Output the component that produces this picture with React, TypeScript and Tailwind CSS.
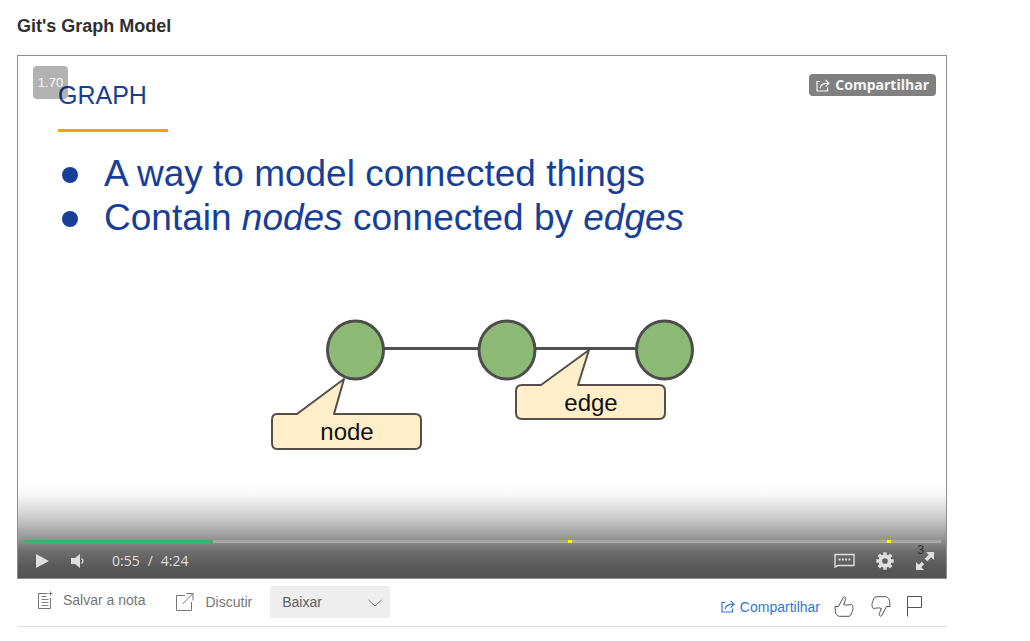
import { useState } from "react";

function ShareIcon({ className }: { className: string }) {
  return (
    <svg viewBox="0 0 14 13" className={className} fill="none" stroke="currentColor" strokeWidth="1.2" aria-hidden="true">
      <path d="M4 2.500H1v9.500h10.500V8.500" />
      <path d="M4.300 9.300C4.300 6 6.500 4.200 12.500 4.200M9.600.8 13 4.200 9.600 7.600" />
    </svg>
  );
}

function NoteIcon() {
  return (
    <svg viewBox="0 0 16 19" className="h-[19px] w-4" fill="none" stroke="currentColor" aria-hidden="true">
      <path d="M9.500 2.500H.5v15h12V7" />
      <path d="M3.500 5.500h5M3.500 8.500h7M3.500 11.500h7M3.500 14.500h7M12.500.5v4M10.500 2.500h4" strokeWidth=".9" />
    </svg>
  );
}

function DiscussIcon() {
  return (
    <svg viewBox="0 0 18 18" className="h-[18px] w-[18px]" fill="none" stroke="currentColor" aria-hidden="true">
      <path d="M9 2.500H.5v15h15V9M10.500.5h6.500v7M17 .5 6.500 11" />
    </svg>
  );
}

function ThumbIcon({ className }: { className: string }) {
  return (
    <svg viewBox="0 0 20 21" className={className} fill="none" stroke="currentColor" strokeWidth="1" strokeLinejoin="round" aria-hidden="true">
      <path d="M1 10.500H4.500L9 2C9.600.6 10.500.5 11 1c.9.8.9 2.200.4 3.300L9.600 8.500c2.600 1.300 5.300.1 8.200.1.8.6 1.200 1.500.9 2.600.5.9.5 2-.1 2.900.1 1.300-.3 2.100-1 2.700-.3 1.700-1.100 2.900-2.600 3.500H5.200C3.200 19.800 1.500 18 1.300 15.500Z" />
    </svg>
  );
}

function FlagIcon() {
  return (
    <svg viewBox="0 0 16 21" className="h-[21px] w-4" fill="none" stroke="currentColor" aria-hidden="true">
      <path d="M.5 20.500V.5h14v11H.5" />
    </svg>
  );
}

function GearIcon() {
  return (
    <svg viewBox="-9 -9 18 18" className="h-[18px] w-[18px]" fill="none" stroke="currentColor" aria-hidden="true">
      <circle r="4.700" strokeWidth="3.700" />
      <g strokeWidth="3.400">
        <path d="M0-8.700V-5M0 8.700V5M-8.700 0H-5M8.700 0H5" />
        <path d="M-6.200-6.200-4-4M6.200 6.200 4 4M-6.200 6.200-4 4M6.200-6.200 4-4" />
      </g>
    </svg>
  );
}

function GraphDiagram() {
  return (
    <svg viewBox="0 0 424 131" className="mx-auto h-[131px] w-[424px]" role="img" aria-label="Graph of three nodes joined by edges">
      <path d="M85 29.500H237M238 29.500H394" stroke="#505050" strokeWidth="3" />
      <g fill="#8cba75" stroke="#4d4d4d" strokeWidth="3">
        <ellipse cx="84.500" cy="31" rx="28" ry="29" />
        <ellipse cx="236" cy="31" rx="28" ry="29" />
        <ellipse cx="393.500" cy="31" rx="28" ry="29" />
      </g>
      <g fill="#feefca" stroke="#554f4c" strokeWidth="2" strokeLinejoin="round">
        <path d="M6 95H26L73 60 63 95h81q6 0 6 6v23q0 6-6 6H6q-5 0-5-6v-23q0-6 5-6Z" />
        <path d="M251 66h19l48-35-11 35h81q6 0 6 6v22q0 6-6 6H251q-6 0-6-6V72q0-6 6-6Z" />
      </g>
      <g className="font-['Liberation_Sans',sans-serif] text-[24px]" fill="#111" textAnchor="middle">
        <text x="76" y="121">node</text>
        <text x="320" y="92">edge</text>
      </g>
    </svg>
  );
}

function Slide() {
  return (
    <div className="pl-10 pt-5 text-[#173e98]">
      <h2 className="text-[25px] leading-[38px]">GRAPH</h2>
      <div className="mt-[15px] h-[3px] w-[110px] bg-[#f7a009]" />
      <ul className="mt-5 text-[37px] leading-[44px]">
        <li className="flex items-center gap-[26px] whitespace-nowrap">
          <span className="ml-1 mt-[2px] size-4 shrink-0 rounded-full bg-[#173e98]" />
          <span>A way to model connected things</span>
        </li>
        <li className="flex items-center gap-[26px] whitespace-nowrap">
          <span className="ml-1 mt-[2px] size-4 shrink-0 rounded-full bg-[#173e98]" />
          <span>
            Contain <em>nodes</em> connected by <em>edges</em>
          </span>
        </li>
      </ul>
      <div className="mt-[79px] pr-[38px]">
        <GraphDiagram />
      </div>
    </div>
  );
}

function PlayerControls() {
  const [time, setTime] = useState(55);
  const total = 264;
  const clock = `${Math.floor(time / 60)}:${String(time % 60).padStart(2, "0")}`;

  return (
    <div className="absolute inset-x-0 bottom-0 bg-[linear-gradient(to_bottom,transparent_0%,rgba(0,0,0,0.03)_14%,rgba(0,0,0,0.2)_37%,rgba(0,0,0,0.44)_61%,rgba(0,0,0,0.57)_72%,rgba(0,0,0,0.65)_88%,rgba(0,0,0,0.67)_100%)] px-[5px] pt-[58px] text-[#dedede]">
      <div className="relative h-[3px] bg-[#a7a7a7]">
        <div className="h-full bg-[#3cb16d]" style={{ width: `${(time / total) * 99.6}%` }} />
        <span className="absolute left-[59.4%] top-0 h-[3px] w-1 bg-[#ff0]" />
        <span className="absolute left-[94.1%] top-0 h-[3px] w-1 bg-[#ff0]" />
        <input
          type="range"
          aria-label="Progresso do vídeo"
          min={0}
          max={total}
          value={time}
          onChange={(event) => setTime(Number(event.target.value))}
          className="absolute inset-x-0 top-0 h-[3px] w-full cursor-pointer opacity-0"
        />
      </div>
      <div className="flex h-[35px] items-center pl-[13px] pr-[7px]">
        <button aria-label="Reproduzir" className="mr-[22px]">
          <svg viewBox="0 0 13 14" className="block h-[14px] w-[13px]" fill="currentColor" aria-hidden="true">
            <path d="M0 0 13 7 0 14Z" />
          </svg>
        </button>
        <button aria-label="Volume">
          <svg viewBox="0 0 14 14" className="block h-[14px] w-[14px]" fill="currentColor" aria-hidden="true">
            <path d="M0 4h4l5-4v14L4 10H0Z" />
            <path d="M10.500 4.500q3 2.500 0 5" fill="none" stroke="currentColor" strokeWidth="1.300" />
          </svg>
        </button>
        <div className="ml-[27px] flex gap-2 font-['Open_Sans','Noto_Sans',sans-serif] text-[14px] leading-5">
          <span>{clock}</span>
          <span>/</span>
          <span>4:24</span>
        </div>
        <div className="ml-auto flex items-center">
          <button aria-label="Legendas" className="mr-[21px]">
            <svg viewBox="0 0 21 15" className="block h-[15px] w-[21px]" fill="none" stroke="currentColor" aria-hidden="true">
              <path d="M1 1.500h19v11H4L1 14Z" strokeWidth="1.400" />
              <path d="M4.500 6.500h12" strokeWidth="2" strokeDasharray="2 1.300" />
            </svg>
          </button>
          <button aria-label="Configurações" className="mr-[22px]">
            <GearIcon />
          </button>
          <button aria-label="Tela cheia" className="relative">
            <svg viewBox="0 0 18 18" className="block h-[18px] w-[18px]" fill="currentColor" aria-hidden="true">
              <path d="M10 0h8v8l-2.700-2.700-4 4-2.600-2.600 4-4ZM0 10v8h8l-2.700-2.700 3-3-2.600-2.600-3 3Z" />
            </svg>
            <span className="absolute -top-[10px] left-[1px] text-[13px] leading-4 text-[#333]">3</span>
          </button>
        </div>
      </div>
    </div>
  );
}

function Player() {
  return (
    <section className="relative aspect-[930/524] border border-[#8d8d8d] bg-white" aria-label="Vídeo">
      <Slide />
      <div className="absolute left-[15px] top-[10px] flex h-[33px] w-[35px] items-center justify-center rounded bg-black/30 text-[13px] text-white/90">
        1.70
      </div>
      <button className="absolute right-[10px] top-[18px] flex h-[22px] items-center gap-[5px] rounded bg-[#808080] px-[7px] font-['Open_Sans','Noto_Sans',sans-serif] text-[14px] font-bold leading-5 text-[#f5f5f5]">
        <ShareIcon className="h-[13px] w-[14px]" />
        Compartilhar
      </button>
      <PlayerControls />
    </section>
  );
}

function ActionBar() {
  return (
    <div className="ml-px flex h-12 items-start border-b border-[#dedede] text-[14px] leading-5 text-[#757575]">
      <button className="ml-5 mt-[11px] flex items-center gap-[9px]">
        <NoteIcon />
        Salvar a nota
      </button>
      <a href="#discutir" className="ml-[30px] mt-[13px] flex items-center gap-3">
        <DiscussIcon />
        Discutir
      </a>
      <div className="relative ml-[18px] mt-[7px]">
        <select aria-label="Baixar" defaultValue="" className="h-8 w-[120px] appearance-none rounded-xs bg-[#eee] pl-3 text-[#5f5f5f]">
          <option value="">Baixar</option>
        </select>
        <svg viewBox="0 0 14 8" className="pointer-events-none absolute right-2 top-[13px] h-2 w-[14px]" fill="none" stroke="currentColor" aria-hidden="true">
          <path d="M.5 1 7 7l6.500-6" />
        </svg>
      </div>
      <div className="ml-auto mr-6 mt-[17px] flex items-center text-[#4d5258]">
        <a href="#compartilhar" className="mr-[14px] flex items-center gap-[5px] text-[#2e78d0]">
          <ShareIcon className="h-[13px] w-[14px]" />
          Compartilhar
        </a>
        <button aria-label="Gostei" className="mr-[17px]">
          <ThumbIcon className="h-[21px] w-5" />
        </button>
        <button aria-label="Não gostei" className="mr-4">
          <ThumbIcon className="h-[21px] w-5 rotate-180" />
        </button>
        <button aria-label="Sinalizar">
          <FlagIcon />
        </button>
      </div>
    </div>
  );
}

export default function App() {
  return (
    <main className="min-h-screen bg-white pl-[17px] pr-[83px] pt-[14px] font-['Liberation_Sans',Arial,sans-serif]">
      <h1 className="mb-[17px] text-[18px] font-bold leading-6 text-[#303030]">Git's Graph Model</h1>
      <Player />
      <ActionBar />
    </main>
  );
}
